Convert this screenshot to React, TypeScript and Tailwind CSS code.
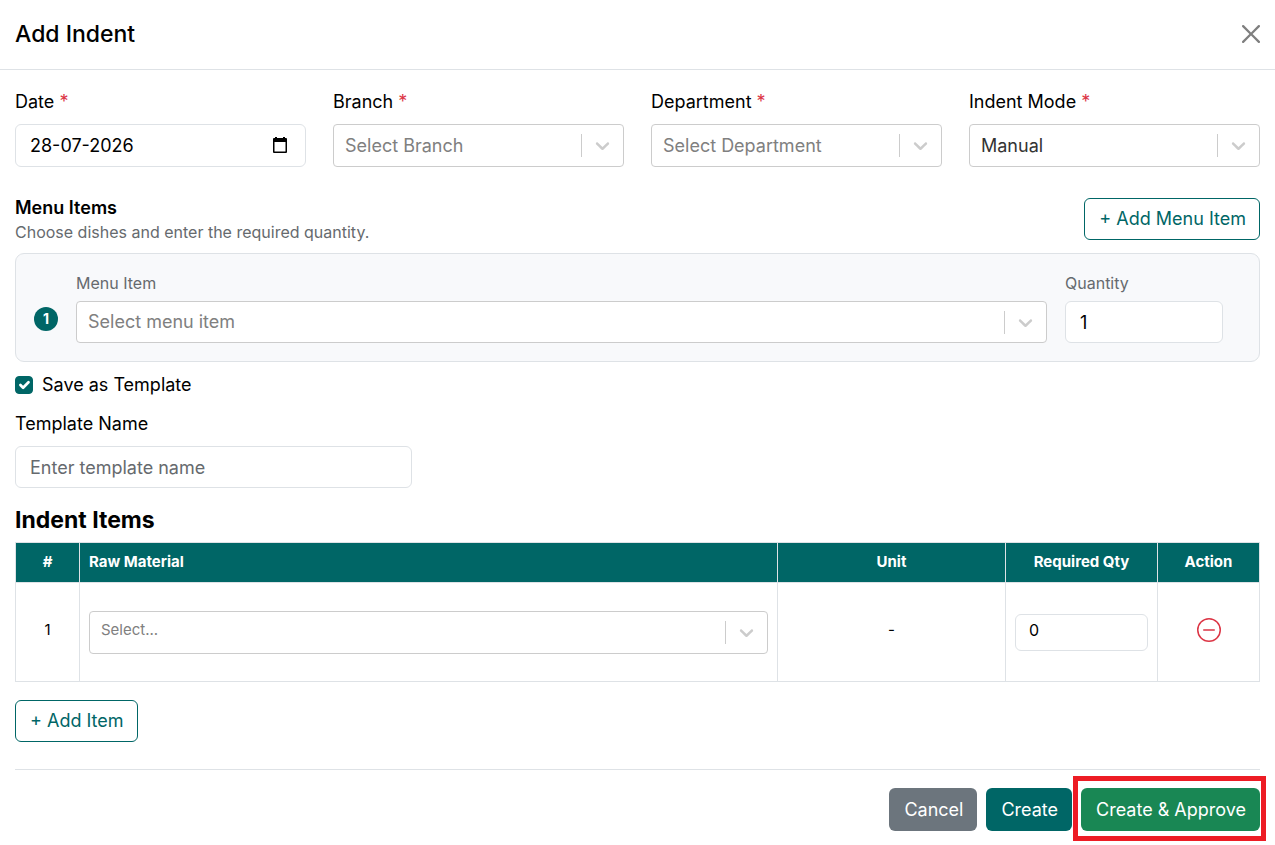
import type { ReactNode } from 'react'

interface ILabelProps {
  htmlFor: string,
  required?: boolean,
  children: ReactNode,
}

const Label = ({ htmlFor, required, children }: ILabelProps) => (
  <label htmlFor={htmlFor} className="block mb-2 text-lg leading-7 text-black">
    {children}
    {required && <span className="text-[#dc3545]"> *</span>}
  </label>
)

interface ISelectProps {
  id: string,
  placeholder?: string,
  options: string[],
  selectClass?: string,
  label?: string,
}

const Select = ({ id, placeholder, options, selectClass = "h-[43px] text-lg", label }: ISelectProps) => (
  <div className="relative">
    <select
      id={id}
      aria-label={label}
      defaultValue={placeholder ? '' : options[0]}
      className={`block w-full appearance-none rounded-sm border border-[#cccccc] bg-white pl-[11px] pr-12 ${selectClass} ${placeholder ? 'text-[#808080]' : 'text-[#333333]'}`}
    >
      {placeholder && <option value="">{placeholder}</option>}
      {options.map((o) => <option key={o} value={o}>{o}</option>)}
    </select>
    <span className="pointer-events-none absolute inset-y-0 right-0 flex items-center">
      <span className="h-[23px] w-px bg-[#cccccc]"></span>
      <svg viewBox="0 0 20 20" className="ml-[9px] mr-[10px] h-[23px] w-[23px] fill-[#cccccc]">
        <path d="M4.516 7.548c0.436-0.446 1.043-0.481 1.576 0l3.908 3.747 3.908-3.747c0.533-0.481 1.141-0.446 1.574 0 0.436 0.445 0.408 1.197 0 1.615-0.406 0.418-4.695 4.502-4.695 4.502-0.217 0.223-0.502 0.335-0.787 0.335s-0.57-0.112-0.789-0.335c0 0-4.287-4.084-4.695-4.502s-0.436-1.17 0-1.615z" />
      </svg>
    </span>
  </div>
)

const inputClass = "block w-full rounded-md border border-[#dee2e6] bg-white px-[14px] text-lg text-black placeholder:text-[#666a6e]"
const outlineClass = "h-[42px] rounded-md border border-[#006666] bg-white pl-[14px] pr-[13px] text-lg text-[#006666] cursor-pointer"
const solidClass = "h-[43px] rounded-md pl-[15px] pr-[14px] text-lg text-white cursor-pointer"
const cellClass = "border border-[#dee2e6] px-[9px]"

const Header = () => (
  <header className="flex h-[70px] items-center justify-between border-b border-[#dee2e6] px-[15px] pb-[2px]">
    <h1 className="text-[23px] font-medium leading-8">Add Indent</h1>
    <button type="button" aria-label="Close" className="cursor-pointer">
      <svg viewBox="0 0 16 16" className="h-[18px] w-[18px] fill-[#7f7f7f]">
        <path d="M.293.293a1 1 0 0 1 1.414 0L8 6.586 14.293.293a1 1 0 1 1 1.414 1.414L9.414 8l6.293 6.293a1 1 0 0 1-1.414 1.414L8 9.414l-6.293 6.293a1 1 0 0 1-1.414-1.414L6.586 8 .293 1.707a1 1 0 0 1 0-1.414z" />
      </svg>
    </button>
  </header>
)

const Fields = () => (
  <div className="grid grid-cols-4 gap-[27px]">
    <div>
      <Label htmlFor="date" required>Date</Label>
      <div className="relative">
        <input id="date" type="text" defaultValue="28-07-2026" className={`${inputClass} h-[43px]`} />
        <button type="button" aria-label="Open calendar" className="absolute inset-y-0 right-[17px] flex items-center pb-px cursor-pointer">
          <svg viewBox="0 0 18 18" className="h-[18px] w-[18px] fill-black">
            <path fillRule="evenodd" d="M4 1h2v1h6V1h2v1h1a1 1 0 0 1 1 1v13a1 1 0 0 1-1 1H3a1 1 0 0 1-1-1V3a1 1 0 0 1 1-1h1zM3.500 6v9.500h11V6z" />
          </svg>
        </button>
      </div>
    </div>
    <div>
      <Label htmlFor="branch" required>Branch</Label>
      <Select id="branch" placeholder="Select Branch" options={[]} />
    </div>
    <div>
      <Label htmlFor="department" required>Department</Label>
      <Select id="department" placeholder="Select Department" options={[]} />
    </div>
    <div>
      <Label htmlFor="mode" required>Indent Mode</Label>
      <Select id="mode" options={['Manual']} />
    </div>
  </div>
)

const MenuItems = () => (
  <section className="mt-[31px]">
    <div className="flex items-start justify-between">
      <div className="-mt-1">
        <h2 className="text-lg font-semibold leading-7">Menu Items</h2>
        <p className="text-base leading-5 text-[#666a6e]">Choose dishes and enter the required quantity.</p>
      </div>
      <button type="button" className={outlineClass}>+ Add Menu Item</button>
    </div>
    <div className="mt-[11px] grid grid-cols-[24px_1fr_158px] items-end gap-[18px] rounded-[9px] border border-[#dee2e6] bg-[#f8f9fb] py-[18px] pl-[18px] pr-9">
      <span className="mb-3 flex h-6 w-6 items-center justify-center rounded-full bg-[#006666] text-sm font-bold text-white">1</span>
      <div>
        <label htmlFor="menu-item" className="mb-[7px] block text-base leading-[22px] text-[#666a6e]">Menu Item</label>
        <Select id="menu-item" placeholder="Select menu item" options={[]} selectClass="h-[42px] text-lg" />
      </div>
      <div>
        <label htmlFor="quantity" className="mb-[7px] block text-base leading-[22px] text-[#666a6e]">Quantity</label>
        <input id="quantity" type="text" inputMode="numeric" defaultValue="1" className={`${inputClass} h-[42px]`} />
      </div>
    </div>
  </section>
)

const Template = () => (
  <section className="mt-[9px]">
    <div className="flex items-center gap-[9px]">
      <span className="relative flex h-7 w-[18px] items-center">
        <input id="save-template" type="checkbox" defaultChecked className="peer h-[18px] w-[18px] appearance-none rounded-sm border border-[#006666] checked:bg-[#006666]" />
        <svg viewBox="0 0 20 20" className="pointer-events-none absolute left-0 h-[18px] w-[18px] fill-none stroke-white stroke-3 opacity-0 peer-checked:opacity-100">
          <path d="m6 10 3 3 6-6" strokeLinecap="round" strokeLinejoin="round" />
        </svg>
      </span>
      <label htmlFor="save-template" className="text-lg leading-7">Save as Template</label>
    </div>
    <div className="mt-[11px] w-[397px] max-w-full">
      <Label htmlFor="template-name">Template Name</Label>
      <input id="template-name" type="text" placeholder="Enter template name" className={`${inputClass} h-[42px]`} />
    </div>
  </section>
)

const IndentItems = () => (
  <section className="mt-4">
    <h2 className="text-[23px] font-bold leading-8">Indent Items</h2>
    <table className="mt-[6px] w-full table-fixed border-collapse text-[15px]">
      <colgroup>
        <col className="w-16" />
        <col />
        <col className="w-[228px]" />
        <col className="w-[152px]" />
        <col className="w-[102px]" />
      </colgroup>
      <thead>
        <tr className="h-10 bg-[#006666] text-white">
          <th className={`${cellClass} pb-px font-bold`}>#</th>
          <th className={`${cellClass} pb-px text-left font-bold`}>Raw Material</th>
          <th className={`${cellClass} pb-px font-bold`}>Unit</th>
          <th className={`${cellClass} pb-px font-bold`}>Required Qty</th>
          <th className={`${cellClass} pb-px font-bold`}>Action</th>
        </tr>
      </thead>
      <tbody>
        <tr className="h-[99px] text-center">
          <td className={`${cellClass} pb-1`}>1</td>
          <td className={cellClass}>
            <Select id="material" label="Raw Material" placeholder="Select..." options={[]} selectClass="h-[43px] pb-1 text-[15px]" />
          </td>
          <td className={`${cellClass} pb-1`}>-</td>
          <td className={cellClass}>
            <input type="text" inputMode="numeric" aria-label="Required Qty" defaultValue="0" className="block h-[37px] w-full rounded-md border border-[#dee2e6] px-[13px] pb-1 text-base" />
          </td>
          <td className={`${cellClass} pb-1`}>
            <button type="button" aria-label="Remove item" className="block mx-auto cursor-pointer">
              <svg viewBox="0 0 16 16" className="h-6 w-6 fill-[#dc3545]">
                <path d="M8 15A7 7 0 1 1 8 1a7 7 0 0 1 0 14m0 1A8 8 0 1 0 8 0a8 8 0 0 0 0 16" />
                <path d="M4 8a.5.5 0 0 1 .5-.5h7a.5.5 0 0 1 0 1h-7A.5.5 0 0 1 4 8" />
              </svg>
            </button>
          </td>
        </tr>
      </tbody>
    </table>
    <button type="button" className={`${outlineClass} mt-[18px]`}>+ Add Item</button>
  </section>
)

const Footer = () => (
  <footer className="mt-[27px] flex justify-end gap-[9px] border-t border-[#dee2e6] pt-[18px]">
    <button type="button" className={`${solidClass} bg-[#6c757d]`}>Cancel</button>
    <button type="button" className={`${solidClass} bg-[#006666]`}>Create</button>
    <div className="relative">
      <button type="button" className={`${solidClass} bg-[#198754]`}>Create &amp; Approve</button>
      <span className="pointer-events-none absolute -top-3 -right-[6px] -bottom-[10px] -left-2 border-5 border-[#ed1c24]"></span>
    </div>
  </footer>
)

const App = () => {
  return (
    <div className="bg-white font-['Inter',sans-serif] text-black">
      <Header />
      <form className="px-[15px] pt-[18px] pb-3">
        <Fields />
        <MenuItems />
        <Template />
        <IndentItems />
        <Footer />
      </form>
    </div>
  )
}

export default App
